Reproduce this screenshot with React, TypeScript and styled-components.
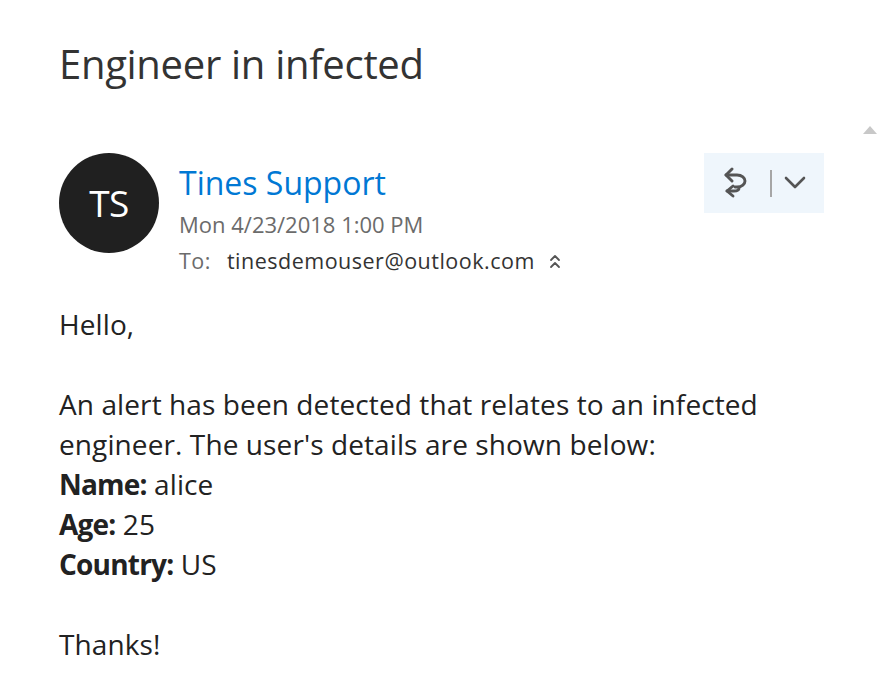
import React from "react";
import styled, { createGlobalStyle } from "styled-components";

const Global = createGlobalStyle`
  html, body {
    margin: 0;
    padding: 0;
    background: #ffffff;
  }
  body {
    font-family: "Open Sans", "Noto Sans", sans-serif;
    color: #262626;
  }
`;

const Page = styled.div`
  position: relative;
  width: 888px;
  height: 688px;
  overflow: hidden;
  box-sizing: border-box;
  padding: 37px 64px 0 59px;
`;

const Subject = styled.h1`
  margin: 0;
  font-size: 40px;
  font-weight: 400;
  line-height: 54px;
  color: #333333;
  letter-spacing: -0.3px;
`;

const ScrollUp = styled.div`
  position: absolute;
  top: 126px;
  right: 11px;
  width: 0;
  height: 0;
  border-left: 7px solid transparent;
  border-right: 7px solid transparent;
  border-bottom: 8px solid #c8c8c8;
`;

const Header = styled.div`
  display: flex;
  align-items: flex-start;
  margin-top: 62px;
`;

const Avatar = styled.div`
  flex: none;
  width: 100px;
  height: 100px;
  border-radius: 50%;
  background: #202020;
  color: #ffffff;
  display: flex;
  align-items: center;
  justify-content: center;
  font-size: 37px;
  letter-spacing: -0.5px;
  padding-bottom: 2px;
  box-sizing: border-box;
`;

const Meta = styled.div`
  flex: 1;
  display: flex;
  flex-direction: column;
  padding-left: 20px;
  padding-top: 10px;
`;

const Sender = styled.div`
  font-size: 32px;
  line-height: 40px;
  color: #0078d4;
`;

const Sent = styled.div`
  font-size: 22px;
  line-height: 26px;
  color: #6b6b6b;
  margin-top: 8px;
`;

const Recipients = styled.div`
  display: flex;
  align-items: center;
  font-size: 21.5px;
  line-height: 26px;
  margin-top: 11px;
  color: #333333;
  letter-spacing: 0.5px;
`;

const ToLabel = styled.span`
  color: #6b6b6b;
  margin-right: 16px;
`;

const Expand = styled.svg`
  margin-left: 14px;
  margin-top: 1px;
`;

const Actions = styled.div`
  flex: none;
  display: flex;
  align-items: center;
  width: 120px;
  height: 60px;
  box-sizing: border-box;
  padding-left: 18px;
  background: #eff6fc;
`;

const Divider = styled.span`
  width: 2px;
  height: 27px;
  background: #a6a6a6;
  margin: 0 12px 0 20px;
`;

const Body = styled.div`
  margin-top: 30px;
  font-size: 28px;
  line-height: 40px;
  color: #222222;
  letter-spacing: 0.1px;
`;

const Line = styled.div<{ $gap?: boolean }>`
  margin-top: ${(p) => (p.$gap ? "40px" : "0")};
`;

const Label = styled.b`
  font-weight: 700;
  letter-spacing: -0.8px;
`;

// reply-all glyph: two left-pointing arrows joined by a looped stroke
const ReplyIcon = () => (
  <svg width="28" height="32" viewBox="0 0 28 32" fill="none" stroke="#555" strokeWidth="2.9" strokeLinecap="round" strokeLinejoin="round">
    <path d="M10 2 L4 8 L10 14" />
    <path d="M4 8 H15 C20 8 23 11 23 14 C23 17 20 20 15 20 H13" />
    <path d="M11 19 L5 24 L11 29" />
    <path d="M5 24 H12 C15 24 17 23 17 21" />
  </svg>
);

const Chevron = () => (
  <svg width="22" height="14" viewBox="0 0 22 14" fill="none" stroke="#555" strokeWidth="2.6" strokeLinecap="round" strokeLinejoin="round">
    <path d="M2 2 L11 11 L20 2" />
  </svg>
);

const App = () => {
  return (
    <Page>
      <Global />
      <Subject>Engineer in infected</Subject>
      <ScrollUp />
      <Header>
        <Avatar>TS</Avatar>
        <Meta>
          <Sender>Tines Support</Sender>
          <Sent>Mon 4/23/2018 1:00 PM</Sent>
          <Recipients>
            <ToLabel>To:</ToLabel>
            tinesdemouser@outlook.com
            <Expand width="12" height="15" viewBox="0 0 12 15" fill="none" stroke="#555" strokeWidth="1.8" strokeLinecap="round" strokeLinejoin="round">
              <path d="M2 6 L6 2 L10 6" />
              <path d="M2 13 L6 9 L10 13" />
            </Expand>
          </Recipients>
        </Meta>
        <Actions>
          <ReplyIcon />
          <Divider />
          <Chevron />
        </Actions>
      </Header>
      <Body>
        <Line>Hello,</Line>
        <Line $gap>An alert has been detected that relates to an infected</Line>
        <Line>engineer. The user's details are shown below:</Line>
        <Line>
          <Label>Name:</Label> alice
        </Line>
        <Line>
          <Label>Age:</Label> 25
        </Line>
        <Line>
          <Label>Country:</Label> US
        </Line>
        <Line $gap>Thanks!</Line>
      </Body>
    </Page>
  );
};

export default App;
